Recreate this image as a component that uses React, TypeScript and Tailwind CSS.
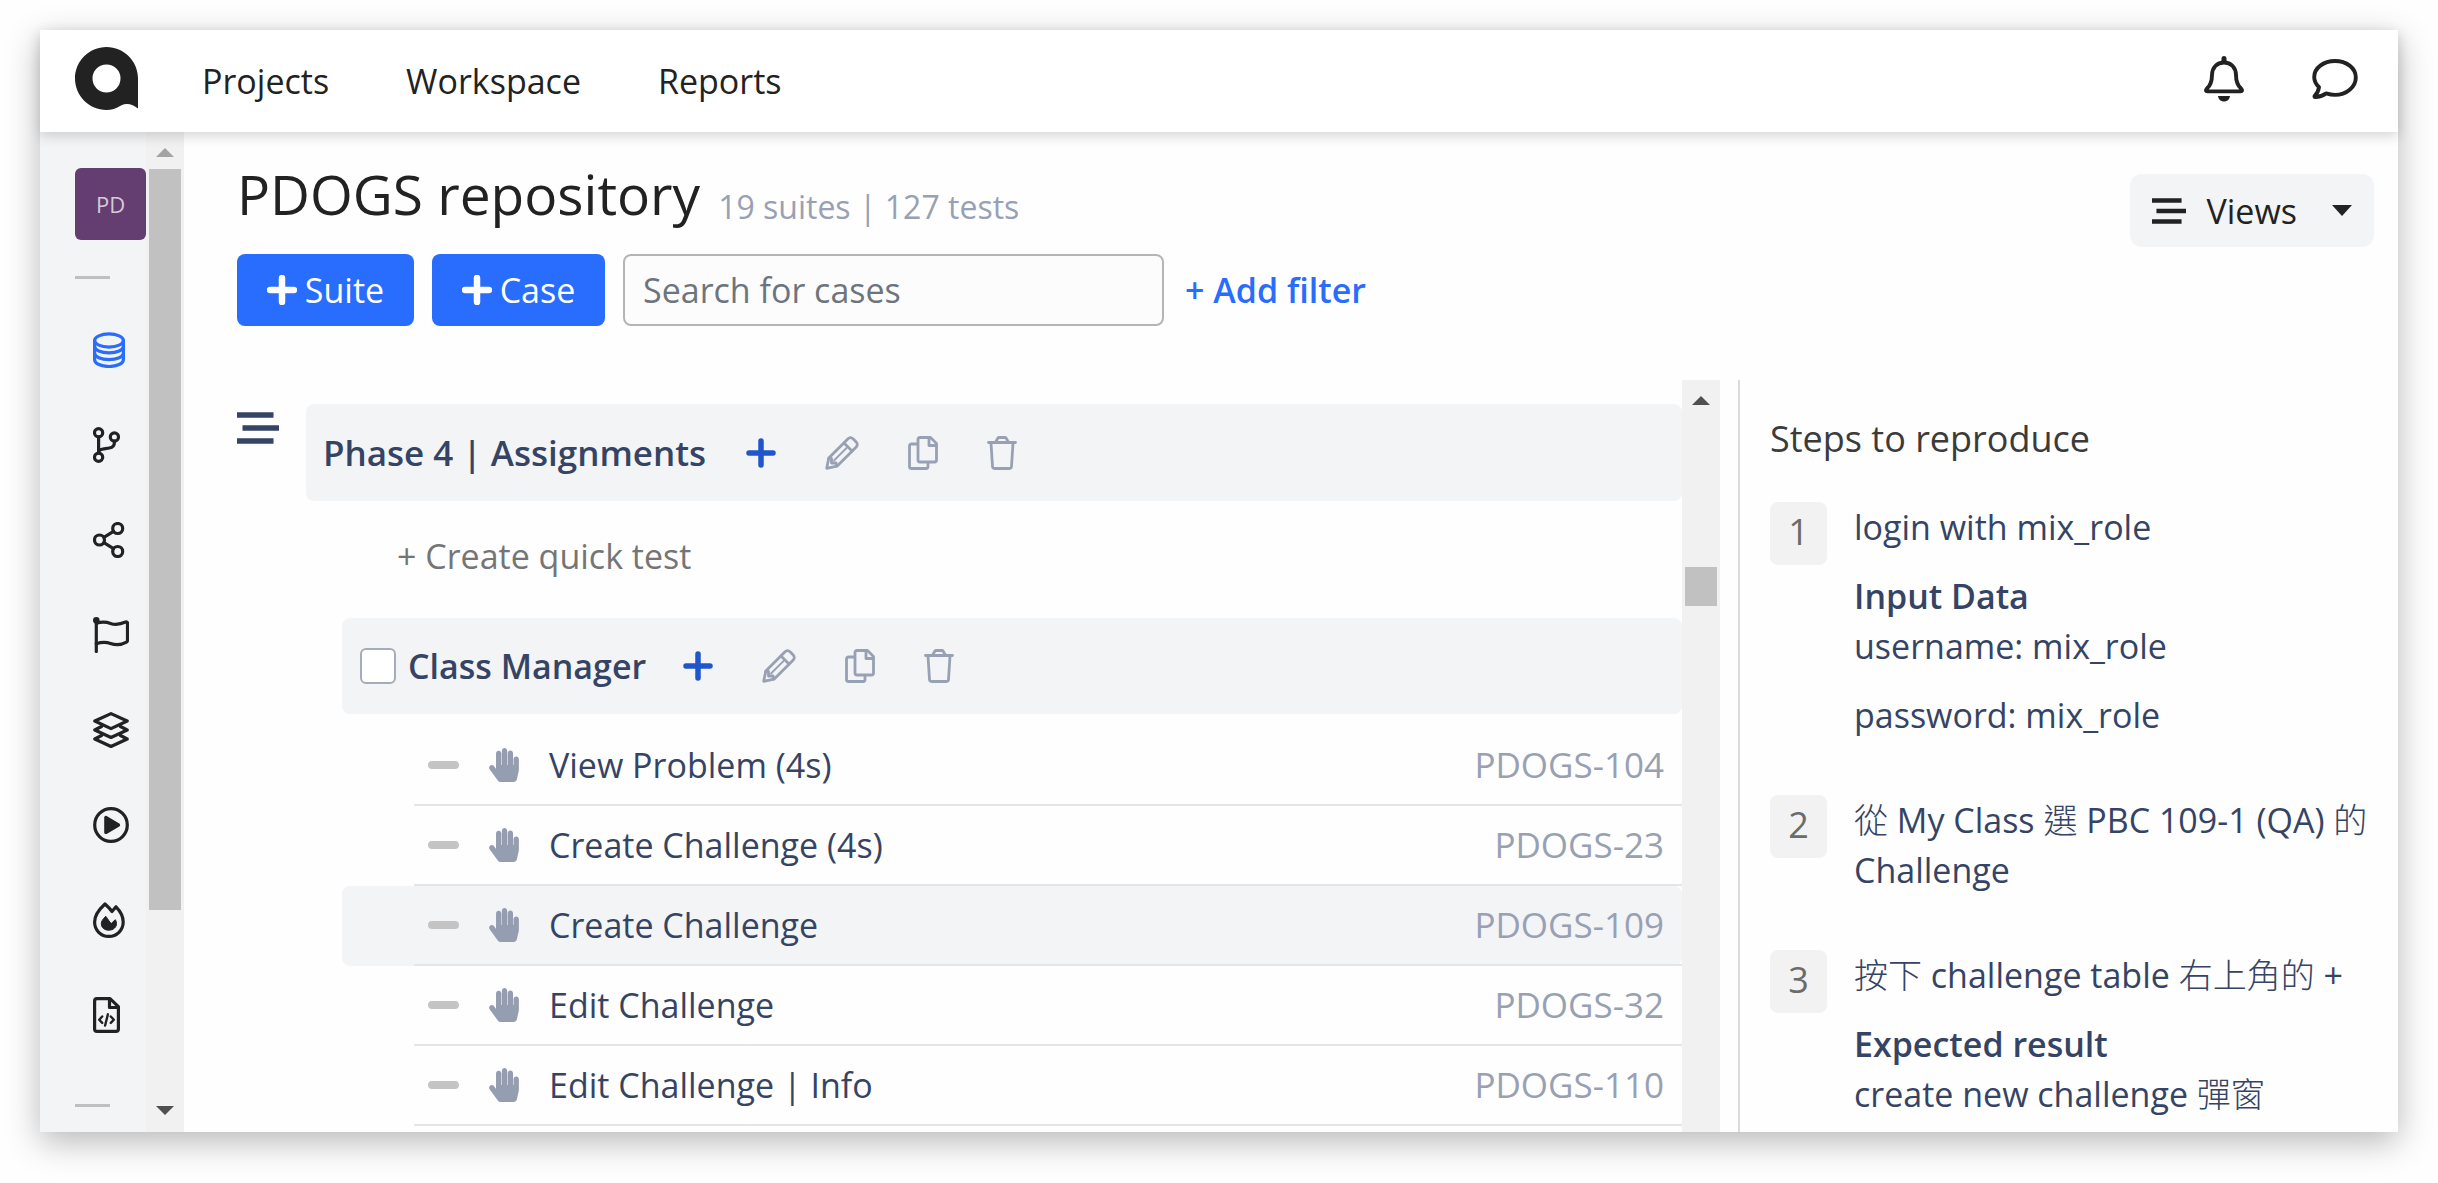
import React from "react";
import { FaHandPaper } from "react-icons/fa";

type IconProps = { className?: string };

function Logo() {
  return (
    <svg viewBox="0 0 63 63" className="h-[63px] w-[63px]" fill="#222222" aria-hidden="true">
      <path
        fillRule="evenodd"
        d="M31.5 0C48.9 0 63 14.1 63 31.5V61.5C58 57.5 52 55.500 46 58.500C41 61.500 36.500 63 31.500 63C14.100 63 0 48.900 0 31.500S14.100 0 31.500 0ZM31.500 17.500A14 14 0 1 0 31.500 45.500A14 14 0 1 0 31.500 17.500Z"
      />
    </svg>
  );
}

function BellIcon() {
  return (
    <svg viewBox="0 0 40 46" className="h-[46px] w-10" fill="none" stroke="#222222" strokeWidth="3.9" strokeLinecap="round" strokeLinejoin="round" aria-hidden="true">
      <path d="M20 2.500v3" strokeWidth="5" />
      <path d="M20 6.500c-7 0-12 5.200-12 12.500c0 6.500-1.200 10.200-5.200 13.800c-1.400 1.600-.9 2.600.6 2.600h33.200c1.500 0 2-1 .6-2.600c-4-3.600-5.200-7.300-5.200-13.800c0-7.300-5-12.500-12-12.500z" />
      <path d="M14 40h12c-.4 3.400-2.800 5.500-6 5.500s-5.600-2.100-6-5.500z" fill="#222222" stroke="none" />
    </svg>
  );
}

function CommentIcon() {
  return (
    <svg viewBox="0 0 46 40" className="h-10 w-[46px]" fill="none" stroke="#222222" strokeWidth="3.9" strokeLinejoin="round" aria-hidden="true">
      <path d="M23 2C11.500 2 2.200 9 2.200 18c0 4 1.800 7.300 4.800 10.200c-.5 3.800-2 6.300-4.300 8.600c-.5.6-.2 1.200.5 1.200c4.200-.1 8-1.500 11-3.600c2.800.9 5.600 1.500 8.800 1.500c11.500 0 20.800-8 20.800-17.500S34.500 2 23 2z" />
    </svg>
  );
}

const sideIcon = "h-9 shrink-0";
const stroke = {
  fill: "none",
  stroke: "currentColor",
  strokeWidth: 3.2,
  strokeLinecap: "round" as const,
  strokeLinejoin: "round" as const,
  "aria-hidden": true,
};

function DatabaseIcon() {
  return (
    <svg viewBox="0 0 32 36" className={sideIcon} {...stroke}>
      <ellipse cx="16" cy="8.500" rx="14.400" ry="6.600" />
      <path d="M1.600 8.500v19.200c0 3.800 6.400 6.800 14.400 6.800s14.400-3 14.400-6.800V8.500" />
      <path d="M1.600 14.500c0 3.600 6.400 6.400 14.400 6.400s14.400-2.800 14.400-6.400" />
      <path d="M1.600 21.200c0 3.600 6.400 6.400 14.400 6.400s14.400-2.800 14.400-6.400" />
    </svg>
  );
}

function BranchIcon() {
  return (
    <svg viewBox="0 0 27 36" className={sideIcon} {...stroke}>
      <circle cx="5.600" cy="5.700" r="4.100" />
      <circle cx="21.400" cy="10" r="4.100" />
      <circle cx="5.600" cy="30.300" r="4.100" />
      <path d="M5.600 10v16M21.400 14.200v1.300c0 3.500-1.800 5-5 5.500l-5.500.8c-3 .4-5.300 1.200-5.300 3.400" />
    </svg>
  );
}

function ShareIcon() {
  return (
    <svg viewBox="0 0 32 36" className={sideIcon} {...stroke}>
      <circle cx="24.700" cy="6.500" r="5" />
      <circle cx="6.500" cy="18" r="5" />
      <circle cx="24.700" cy="29.500" r="5" />
      <path d="M10.900 15.300l9.600-6M10.900 20.700l9.600 6" />
    </svg>
  );
}

function FlagIcon() {
  return (
    <svg viewBox="0 0 36 36" className={sideIcon} {...stroke}>
      <circle cx="3.300" cy="3.300" r="1.700" fill="currentColor" />
      <path d="M3.300 4v30.500" />
      <path d="M3.300 6.300c5.500-1.800 9.700-1.600 14.200.1c4.800 1.800 9 1.300 15.200-1.300c1-.4 1.800 0 1.800 1v17.400c0 .8-.3 1.200-1 1.600c-5.500 3-10.500 3.300-16 1.300c-5-1.700-9-1.500-14.200.3" />
    </svg>
  );
}

function LayersIcon() {
  return (
    <svg viewBox="0 0 36 36" className={sideIcon} {...stroke}>
      <path d="M18 1.600L34.200 9 18 16.600 1.800 9z" />
      <path d="M8.500 14.500L1.800 18 18 25.500 34.200 18l-6.700-3.500" />
      <path d="M8.500 23.500L1.800 27 18 34.500 34.200 27l-6.700-3.500" />
    </svg>
  );
}

function PlayIcon() {
  return (
    <svg viewBox="0 0 36 36" className={sideIcon} {...stroke}>
      <circle cx="18" cy="18" r="16.300" />
      <path d="M12.800 10.500v15L25.500 18z" fill="currentColor" />
    </svg>
  );
}

function FireIcon() {
  return (
    <svg viewBox="0 0 32 36" className={sideIcon} {...stroke}>
      <path d="M12 2C6.500 7 1.600 13.500 1.600 20c0 8.200 6.200 14.400 14.200 14.400S30.200 28.200 30.200 20c0-5.200-3.200-11.200-7.200-15.200l-4 4.700C17.200 7 14.800 4.500 12 2z" />
      <path d="M12.500 14.500c-3 3-4.200 5-4.200 7.200c0 4 3.200 6.500 7.500 6.500s7.700-2.700 7.700-6.700c0-1.500-.4-2.700-1.200-3.800l-4 3.800z" fill="currentColor" strokeWidth="1" />
    </svg>
  );
}

function FileCodeIcon() {
  return (
    <svg viewBox="0 0 27 36" className={sideIcon} {...stroke}>
      <path d="M4 1.600h13l8.400 8v22.300c0 1.500-1 2.500-2.500 2.500H4c-1.500 0-2.400-1-2.400-2.500V4.100C1.600 2.600 2.500 1.600 4 1.600z" />
      <path d="M16.500 2v8.500H25" />
      <path d="M9.200 19.500l-3 3.200 3 3.200M17.800 19.500l3 3.200-3 3.200M14.900 17.300l-2.800 11.200" strokeWidth="2.400" />
    </svg>
  );
}

function PlusIcon({ className }: IconProps) {
  return (
    <svg viewBox="0 0 30 30" className={className} fill="none" stroke="currentColor" strokeLinecap="round" aria-hidden="true">
      <path d="M15 3v24M3 15h24" />
    </svg>
  );
}

const thin = { ...stroke, strokeWidth: 2.8 };

function PencilIcon() {
  return (
    <svg viewBox="0 0 34 34" className="h-[34px]" {...thin}>
      <path d="M1.700 32.300L3.800 22 22.800 3c1.700-1.700 3.800-1.700 5.500 0l2.700 2.700c1.700 1.700 1.700 3.800 0 5.500L12 30.200z" />
      <path d="M19 7l8 8M3.800 22.300l2.700.2v4.500h4.600l.7 3" />
      <path d="M9 24.500L21.500 12" strokeWidth="1.800" />
    </svg>
  );
}

function CopyIcon() {
  return (
    <svg viewBox="0 0 30 34" className="h-[34px]" {...thin}>
      <path d="M12 1.500h10.500l6 6V24c0 1.200-.8 2-2 2H12c-1.200 0-2-.8-2-2V3.500c0-1.200.8-2 2-2z" />
      <path d="M21 2v7.500h7.500" />
      <path d="M9.500 8H3.500c-1.200 0-2 .8-2 2v20.500c0 1.200.8 2 2 2H18c1.200 0 2-.8 2-2V27" />
    </svg>
  );
}

function TrashIcon() {
  return (
    <svg viewBox="0 0 30 34" className="h-[34px]" {...thin}>
      <path d="M1.500 6.500h27M8.500 6.200l2.300-3.900c.3-.5.8-.8 1.400-.8h5.600c.6 0 1.100.3 1.400.8l2.300 3.900" />
      <path d="M4 7l1.500 23.500c.1 1.200.9 2 2 2h15c1.100 0 1.900-.8 2-2L26 7" />
    </svg>
  );
}

function OutlineIcon({ className }: IconProps) {
  return (
    <svg viewBox="0 0 42 32" className={className} stroke="currentColor" strokeWidth="5.400" aria-hidden="true">
      <path d="M0 3h36.500M5.500 16H42M0 29h36.500" />
    </svg>
  );
}

function Arrow({ down, className }: { down?: boolean; className: string }) {
  return (
    <svg viewBox="0 0 18 9" preserveAspectRatio="none" className={className} fill="currentColor" aria-hidden="true">
      {down ? <path d="M0 0h18L9 9z" /> : <path d="M0 9h18L9 0z" />}
    </svg>
  );
}

const sideItems = [
  { label: "Repository", icon: DatabaseIcon, active: true },
  { label: "Branches", icon: BranchIcon },
  { label: "Shared steps", icon: ShareIcon },
  { label: "Milestones", icon: FlagIcon },
  { label: "Test plans", icon: LayersIcon },
  { label: "Test runs", icon: PlayIcon },
  { label: "Defects", icon: FireIcon },
  { label: "Configurations", icon: FileCodeIcon },
];

const cases = [
  { title: "View Problem (4s)", id: "PDOGS-104" },
  { title: "Create Challenge (4s)", id: "PDOGS-23" },
  { title: "Create Challenge", id: "PDOGS-109", selected: true },
  { title: "Edit Challenge", id: "PDOGS-32" },
  { title: "Edit Challenge | Info", id: "PDOGS-110" },
];

function SuiteActions() {
  return (
    <div className="flex items-center gap-[49px] text-[#98a1b3]">
      <button type="button" aria-label="Add" className="text-[#2055cc]">
        <PlusIcon className="h-[30px] w-[30px] stroke-[5.500]" />
      </button>
      <button type="button" aria-label="Edit"><PencilIcon /></button>
      <button type="button" aria-label="Copy"><CopyIcon /></button>
      <button type="button" aria-label="Delete"><TrashIcon /></button>
    </div>
  );
}

function Cjk({ children }: { children: React.ReactNode }) {
  return <span lang="zh-Hant" className="font-light">{children}</span>;
}

function Step({ n, children }: { n: number; children: React.ReactNode }) {
  return (
    <li className="flex gap-[27px]">
      <span className="flex h-[63px] w-[57px] shrink-0 items-center justify-center rounded-lg bg-[#f2f2f2] pb-1 text-[36px] text-[#6b6b6b]">{n}</span>
      <div className="flex min-w-0 flex-col gap-[19px]">{children}</div>
    </li>
  );
}

export default function App() {
  return (
    <div className="flex h-screen flex-col bg-[#fefefe] px-10 pt-[30px] pb-[51px] font-['Open_Sans','Noto_Sans_CJK_TC',sans-serif] text-[34px] leading-[50px] text-[#222222]">
      <div className="flex min-h-0 flex-1 flex-col bg-[#fefefe] shadow-[0_10px_32px_rgba(0,0,0,0.28)]">
        <header className="z-10 flex h-[102px] shrink-0 items-center bg-white pr-10 pl-[35px] shadow-[0_4px_12px_rgba(0,0,0,0.16)]">
          <a href="#home" aria-label="Home" className="mb-[6px]"><Logo /></a>
          <nav className="ml-16 flex gap-[77px]">
            <a href="#projects">Projects</a>
            <a href="#workspace">Workspace</a>
            <a href="#reports">Reports</a>
          </nav>
          <div className="mb-1 ml-auto flex items-center gap-[68px]">
            <button type="button" aria-label="Notifications"><BellIcon /></button>
            <button type="button" aria-label="Chat"><CommentIcon /></button>
          </div>
        </header>

        <div className="flex min-h-0 flex-1">
          <aside className="flex w-[106px] shrink-0 flex-col overflow-hidden bg-[#f3f4f6] pt-9 pl-[35px]">
            <a href="#project" className="flex h-[72px] shrink-0 items-center justify-center rounded-md bg-[#643d71] text-[22px] text-[#d4cbd8]">PD</a>
            <div className="mt-9 h-[3px] w-[35px] shrink-0 bg-[#bfbfbf]" />
            <nav className="mt-[23px] flex flex-col">
              {sideItems.map(({ label, icon: Icon, active }) => (
                <a key={label} href="#nav" aria-label={label} className={"flex h-[95px] items-center pl-[18px] " + (active ? "text-[#296dfe]" : "text-[#222222]")}>
                  <Icon />
                </a>
              ))}
            </nav>
            <div className="mt-[42px] h-[3px] w-[35px] shrink-0 bg-[#bfbfbf]" />
          </aside>
          <div className="flex w-[38px] shrink-0 flex-col items-center bg-[#f1f1f1] pt-4 pb-[17px]">
            <Arrow className="h-[9px] w-[18px] text-[#a3a3a3]" />
            <div className="mt-3 h-[741px] w-8 bg-[#c1c1c1]" />
            <Arrow down className="mt-auto h-[9px] w-[18px] text-[#505050]" />
          </div>

          <main className="flex min-w-0 flex-1 flex-col">
            <div className="flex justify-between pt-[26px] pr-6 pb-[54px] pl-[53px]">
              <div>
                <div className="flex items-end gap-[18px]">
                  <h1 className="text-[55px] leading-[72px]">PDOGS repository</h1>
                  <p className="text-[32px] leading-[46px] text-[#98a1b3]">19 suites | 127 tests</p>
                </div>
                <div className="mt-6 flex h-[72px] gap-[18px]">
                  <button type="button" className="flex w-[177px] items-center justify-center gap-2 rounded-lg bg-[#296dfe] text-white">
                    <PlusIcon className="h-[30px] w-[30px] stroke-[6.500]" />
                    Suite
                  </button>
                  <button type="button" className="flex w-[173px] items-center justify-center gap-2 rounded-lg bg-[#296dfe] text-white">
                    <PlusIcon className="h-[30px] w-[30px] stroke-[6.500]" />
                    Case
                  </button>
                  <input type="search" aria-label="Search for cases" placeholder="Search for cases" className="w-[541px] rounded-lg border-2 border-[#b5b5b5] bg-[#fcfcfc] px-[18px] placeholder:text-[#6c757d]" />
                  <button type="button" className="pl-[3px] font-semibold text-[#296dfe]">+ Add filter</button>
                </div>
              </div>
              <button type="button" className="mt-4 flex h-[73px] items-center rounded-xl bg-[#f3f4f6] px-[22px]">
                <OutlineIcon className="h-[26px] w-[34px]" />
                <span className="ml-[21px]">Views</span>
                <Arrow down className="ml-[35px] h-[11px] w-5" />
              </button>
            </div>

            <div className="flex min-h-0 flex-1">
              <section className="flex min-w-0 flex-1 overflow-hidden pl-[53px]">
                <button type="button" aria-label="Toggle suites" className="mt-8 mr-[27px] h-8 shrink-0 text-[#354464]">
                  <OutlineIcon className="h-8 w-[42px]" />
                </button>
                <div className="min-w-0 flex-1 pt-6 text-[#354464]">
                  <div className="flex h-[97px] items-center rounded-lg bg-[#f3f4f6] pl-[17px]">
                    <h2 className="mr-10 text-[35px] font-semibold">Phase 4 | Assignments</h2>
                    <SuiteActions />
                  </div>
                  <button type="button" className="flex h-[117px] items-center pb-2 pl-[91px] text-[#757575]">+ Create quick test</button>
                  <div className="ml-9 flex h-24 items-center rounded-lg bg-[#f3f4f6] pl-[18px]">
                    <input id="class-manager" type="checkbox" className="h-9 w-9 appearance-none rounded-md border-2 border-[#a5adbd] bg-white" />
                    <h3 className="mr-[37px] ml-3 font-semibold"><label htmlFor="class-manager">Class Manager</label></h3>
                    <SuiteActions />
                  </div>
                  <ul className="mt-3 ml-9">
                    {cases.map((c) => (
                      <li key={c.id} className={"rounded-lg pl-[72px] " + (c.selected ? "bg-[#f3f4f6]" : "")}>
                        <a href="#case" className="flex h-20 items-center gap-[30px] border-b-2 border-[#e4e5e7] pr-[18px] pl-[14px]">
                          <span className="h-2 w-[31px] rounded-sm bg-[#c4c4c4]" />
                          <FaHandPaper className="h-[34px] w-[30px] text-[#959db0]" aria-hidden="true" />
                          <span>{c.title}</span>
                          <span className="ml-auto text-[35px] text-[#98a1b3]">{c.id}</span>
                        </a>
                      </li>
                    ))}
                  </ul>
                </div>
              </section>
              <div className="flex w-[38px] shrink-0 flex-col items-center bg-[#f1f1f1] pt-4">
                <Arrow className="h-[9px] w-[18px] text-[#505050]" />
                <div className="mt-[162px] h-[39px] w-8 bg-[#c1c1c1]" />
              </div>

              <section className="ml-[18px] w-[660px] shrink-0 overflow-hidden border-l-2 border-[#dbdbdb] pt-[34px] pr-4 pl-[30px]">
                <h2 className="text-[36px] text-[#3b3b3b]">Steps to reproduce</h2>
                <ol className="mt-[38px] flex flex-col gap-[55px] text-[#354464]">
                  <Step n={1}>
                    <p>login with mix_role</p>
                    <div>
                      <h3 className="font-semibold">Input Data</h3>
                      <p>username: mix_role</p>
                    </div>
                    <p>password: mix_role</p>
                  </Step>
                  <Step n={2}>
                    <p>
                      <Cjk>從</Cjk> My Class <Cjk>選</Cjk> PBC 109-1 (QA) <Cjk>的</Cjk> Challenge
                    </p>
                  </Step>
                  <Step n={3}>
                    <p>
                      <Cjk>按下</Cjk> challenge table <Cjk>右上角的</Cjk> +
                    </p>
                    <div>
                      <h3 className="font-semibold">Expected result</h3>
                      <p>
                        create new challenge <Cjk>彈窗</Cjk>
                      </p>
                    </div>
                  </Step>
                </ol>
              </section>
            </div>
          </main>
        </div>
      </div>
    </div>
  );
}
